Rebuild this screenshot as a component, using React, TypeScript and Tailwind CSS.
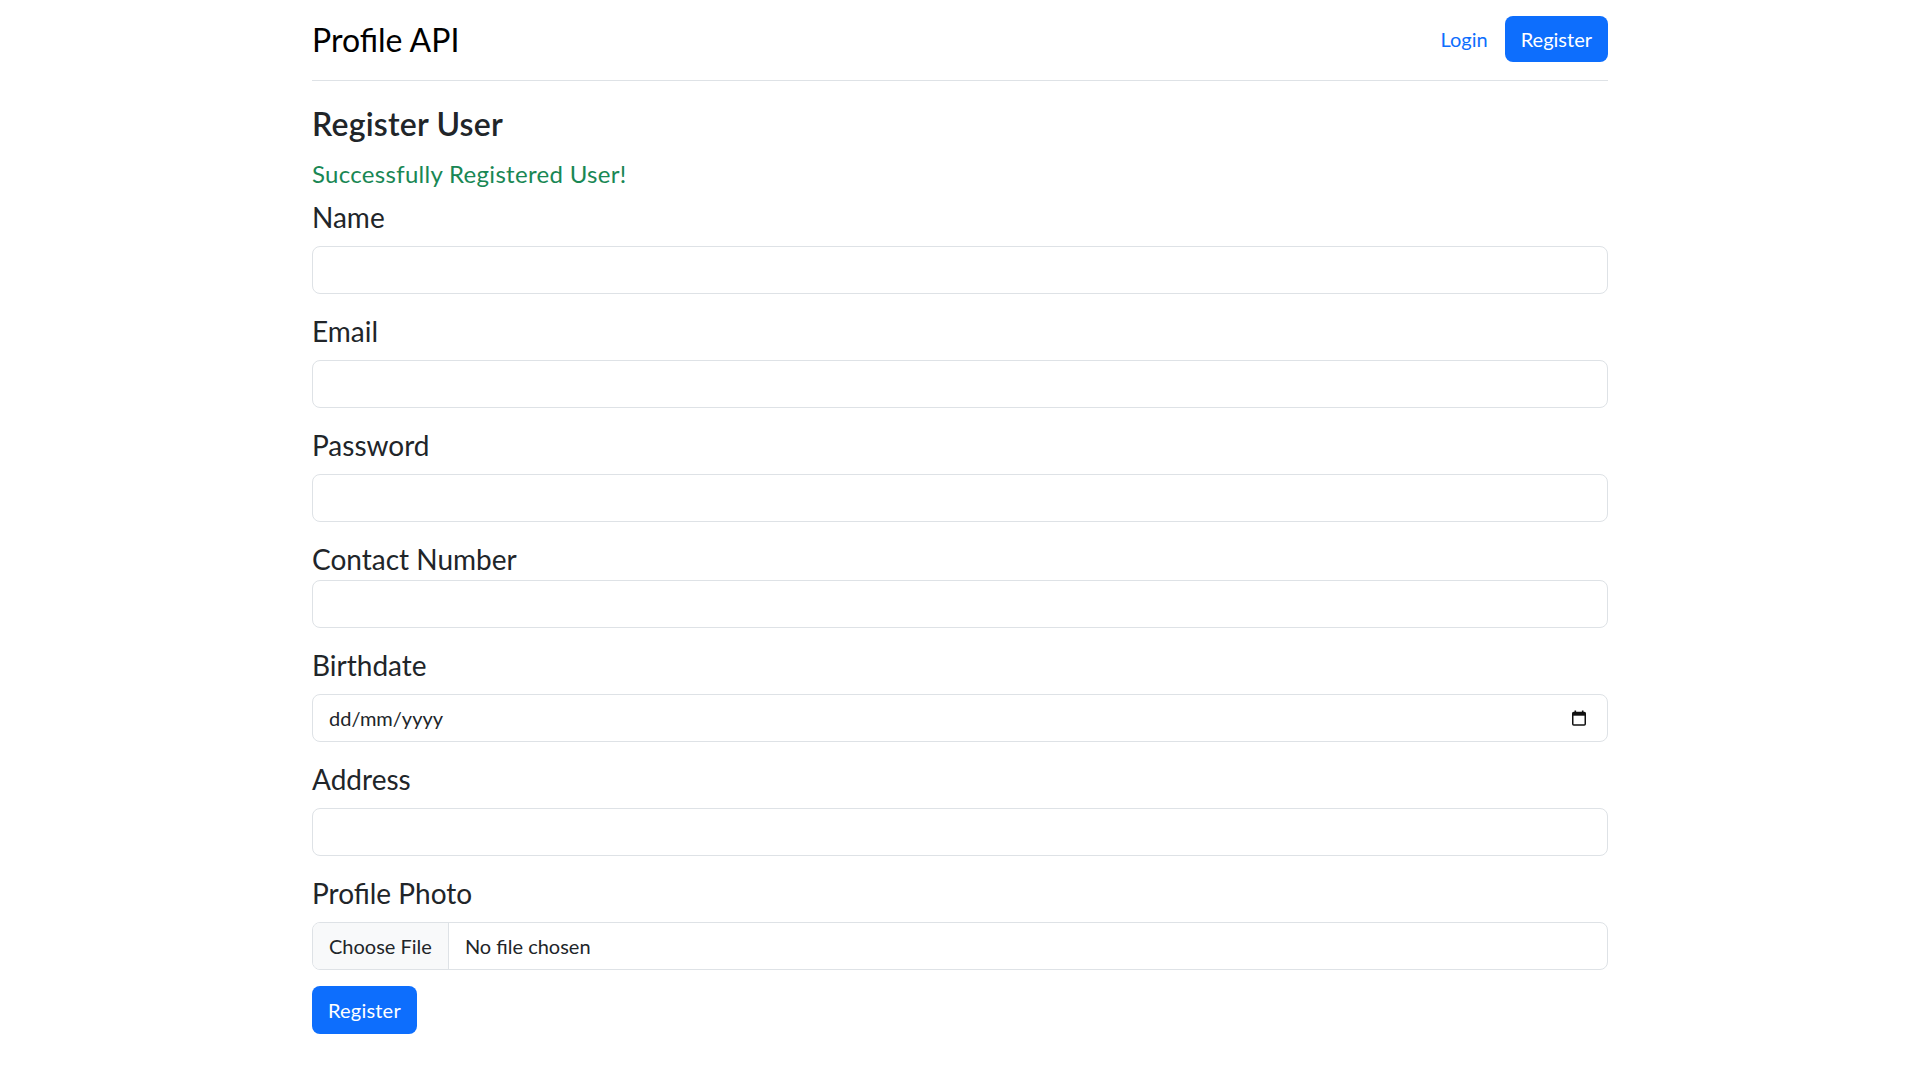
import { ReactNode } from 'react';

function Label({ children, tight }: { children: ReactNode; tight?: boolean }) {
  return (
    <label className={`block text-[28px] leading-[1.5] text-[#212529] ${tight ? '' : 'mb-2'}`}>
      {children}
    </label>
  );
}

function TextField() {
  return <div className="h-[48px] w-full rounded-lg border border-[#dee2e6] bg-white" />;
}

function CalendarIcon() {
  return (
    <svg width="16" height="16" viewBox="0 0 16 16" fill="none">
      <rect x="3.5" y="0.5" width="1.6" height="3" fill="#111" />
      <rect x="10.9" y="0.5" width="1.6" height="3" fill="#111" />
      <rect x="1.75" y="2.5" width="12.5" height="12.5" rx="1" stroke="#111" strokeWidth="1.5" />
      <rect x="1.75" y="2.5" width="12.5" height="3.2" fill="#111" />
    </svg>
  );
}

export default function App() {
  return (
    <div className="min-h-screen bg-white font-['Lato',sans-serif] text-[#212529]">
      <div className="w-[1296px] mx-auto">
        <header className="flex items-center justify-between py-4 border-b border-[#dee2e6]">
          <span className="text-[32px] leading-[1.5] text-black">Profile API</span>
          <nav className="self-start flex items-center gap-[17px]">
            <a className="text-[20px] text-[#0d6efd] leading-[1.5]">Login</a>
            <button className="h-[46px] px-4 rounded-lg bg-[#0d6efd] text-white text-[20px] leading-[1.5]">
              Register
            </button>
          </nav>
        </header>

        <main className="mt-6">
          <h2 className="text-[32px] leading-[1.2] font-semibold text-[#212529] tracking-[0.2px] mb-[13px]">
            Register User
          </h2>
          <p className="text-[24px] leading-[1.5] text-[#198754] tracking-[0.3px] mb-[4px]">
            Successfully Registered User!
          </p>

          <form>
            <div className="mb-4">
              <Label>Name</Label>
              <TextField />
            </div>
            <div className="mb-4">
              <Label>Email</Label>
              <TextField />
            </div>
            <div className="mb-4">
              <Label>Password</Label>
              <TextField />
            </div>
            <div className="mb-4">
              <Label tight>Contact Number</Label>
              <TextField />
            </div>
            <div className="mb-4">
              <Label>Birthdate</Label>
              <div className="h-[48px] w-full rounded-lg border border-[#dee2e6] flex items-center justify-between pl-4 pr-5">
                <span className="text-[20px] text-[#212529]">dd/mm/yyyy</span>
                <CalendarIcon />
              </div>
            </div>
            <div className="mb-4">
              <Label>Address</Label>
              <TextField />
            </div>
            <div className="mb-4">
              <Label>Profile Photo</Label>
              <div className="h-[48px] w-full rounded-lg border border-[#dee2e6] flex items-stretch overflow-hidden">
                <span className="flex items-center px-4 bg-[#f8f9fa] border-r border-[#dee2e6] text-[20px] text-[#212529]">
                  Choose File
                </span>
                <span className="flex items-center pl-4 text-[20px] text-[#212529]">No file chosen</span>
              </div>
            </div>
            <button type="button" className="h-[48px] px-4 rounded-lg bg-[#0d6efd] text-white text-[20px] tracking-[0.2px]">
              Register
            </button>
          </form>
        </main>
      </div>
    </div>
  );
}
